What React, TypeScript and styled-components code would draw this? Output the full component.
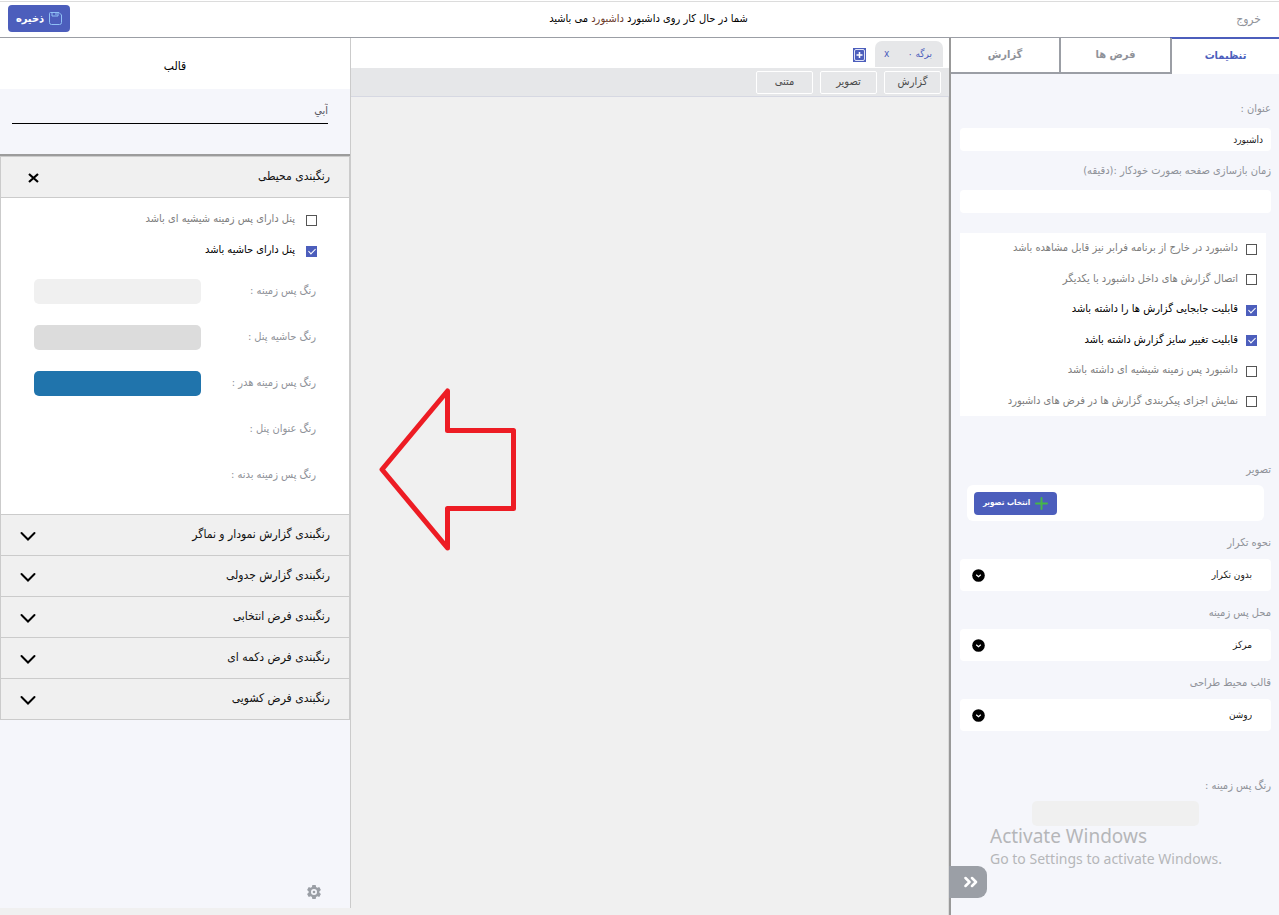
import React from 'react';
import styled, { createGlobalStyle, css } from 'styled-components';

const c = {
  primary: '#4c5ebc',
  panel: '#f5f6fb',
  canvas: '#f0f0f0',
  strip: '#e6e7e9',
  line: '#cbcbcb',
  frame: '#9b9ea5',
  muted: '#8f9299',
  text: '#1c1c1c',
};

const GlobalStyle = createGlobalStyle`
  *, *::before, *::after { box-sizing: border-box; }
  html, body { margin: 0; }
  body {
    background: ${c.canvas};
    color: ${c.text};
    font-family: 'DejaVu Sans Condensed', 'DejaVu Sans', sans-serif;
    font-size: 11px;
    line-height: 16px;
  }
  button, input, select { font: inherit; color: inherit; margin: 0; }
  button { border: 0; background: none; padding: 0; cursor: pointer; }
`;

const Page = styled.div`
  display: flex;
  flex-direction: column;
  min-height: 100vh;
`;

const TopBar = styled.header`
  display: grid;
  grid-template-columns: 1fr auto 1fr;
  align-items: center;
  height: 38px;
  padding: 0 18px 0 8px;
  background: #fff;
  border-bottom: 1px solid ${c.frame};
  box-shadow: inset 0 1px #fff, inset 0 2px #dcdcdc;
`;

const ExitLink = styled.a`
  justify-self: start;
  color: ${c.muted};
  font-size: 12px;
  text-decoration: none;
`;

const Status = styled.p`
  margin: 0;
  padding-left: 28px;
  color: #000;
`;

const Accent = styled.span`
  color: #6b3a2c;
`;

const PrimaryButton = styled.button<{ $small?: boolean }>`
  display: flex;
  align-items: center;
  justify-content: center;
  gap: 5px;
  width: ${(p) => (p.$small ? 83 : 62)}px;
  height: ${(p) => (p.$small ? 23 : 27)}px;
  border-radius: 4px;
  background: ${c.primary};
  color: #fff;
  font-size: ${(p) => (p.$small ? 8 : 11)}px;
  font-weight: bold;
  white-space: nowrap;
`;

const SaveButton = styled(PrimaryButton)`
  justify-self: end;
`;

const Workspace = styled.main`
  flex: 1;
  display: grid;
  grid-template-columns: 330px minmax(0, 1fr) 351px;
`;

const Settings = styled.aside`
  position: relative;
  display: flex;
  flex-direction: column;
  background: ${c.panel};
  border-left: 2px solid #999;
`;

const Tabs = styled.nav`
  display: grid;
  grid-template-columns: 109px 111px 1fr;
  height: 36px;
`;

const Tab = styled.button<{ $active?: boolean }>`
  background: #fff;
  color: ${c.muted};
  font-weight: bold;
  border-bottom: 2px solid ${c.frame};
  border-left: 2px solid ${c.frame};
  &:last-child { border-left: 0; }
  ${(p) =>
    p.$active &&
    css`
      color: ${c.primary};
      border-bottom: 0;
      box-shadow: 0 -1px ${c.primary}, inset 0 1px ${c.primary};
    `}
`;

const SettingsBody = styled.div`
  display: flex;
  flex-direction: column;
  padding: 27px 8px 0 9px;
`;

const Field = styled.div<{ $gap?: number }>`
  display: flex;
  flex-direction: column;
  gap: ${(p) => p.$gap ?? 8}px;
  margin-bottom: 14px;
`;

const TextField = styled(Field)`
  margin-bottom: 12px;
`;

const Caption = styled.label`
  color: ${c.muted};
`;

const TextBox = styled.input`
  width: 100%;
  height: 23px;
  padding: 0 8px;
  border: 0;
  border-radius: 4px;
  background: #fff;
  font-size: 10px;
`;

const CheckCard = styled.div`
  display: flex;
  flex-direction: column;
  justify-content: space-between;
  height: 183px;
  margin: 8px 5px 46px 0;
  padding: 7px 9px;
  background: #fff;
`;

const CheckLabel = styled.label<{ $gap: number }>`
  display: flex;
  align-items: center;
  gap: ${(p) => p.$gap}px;
  color: #7d7d7d;
  white-space: nowrap;
  &:has(input:checked) { color: #000; }
`;

const CheckBox = styled.input`
  appearance: none;
  flex: none;
  width: 11px;
  height: 11px;
  position: relative;
  top: 1px;
  border: 1px solid #555;
  background: #fff;
  &:checked {
    border-color: ${c.primary};
    background: ${c.primary};
  }
  &:checked::after {
    content: '';
    position: absolute;
    left: 3px;
    top: 0;
    width: 4px;
    height: 7px;
    border: solid #fff;
    border-width: 0 1px 1px 0;
    transform: rotate(45deg);
  }
`;

const PictureBox = styled.div`
  display: flex;
  align-items: center;
  justify-content: flex-end;
  height: 36px;
  margin: 0 7px;
  padding: 0 7px;
  border-radius: 6px;
  background: #fff;
`;

const SelectWrap = styled.div`
  display: flex;
  align-items: center;
  height: 32px;
  padding: 0 19px 0 12px;
  border-radius: 4px;
  background: #fff;
  font-size: 10px;
`;

const PlainSelect = styled.select`
  appearance: none;
  flex: 1;
  height: 100%;
  padding: 0;
  border: 0;
  background: transparent;
`;

const ColorField = styled(Field)`
  margin-top: 33px;
`;

const Swatch = styled.button<{ $color: string; $center?: boolean }>`
  width: 167px;
  height: 25px;
  border-radius: 5px;
  background: ${(p) => p.$color};
  ${(p) => p.$center && 'align-self: center;'}
`;

const CollapseButton = styled.button`
  position: absolute;
  left: -2px;
  bottom: 17px;
  display: flex;
  align-items: center;
  justify-content: center;
  width: 38px;
  height: 32px;
  padding-left: 6px;
  border-radius: 0 9px 9px 0;
  background: #9b9fa6;
  color: #fff;
`;

const Watermark = styled.div`
  direction: ltr;
  position: absolute;
  left: 39px;
  bottom: 46px;
  color: #b5b6b9;
  font: 14px/20px 'Noto Sans', sans-serif;
  white-space: nowrap;
  pointer-events: none;
`;

const WatermarkTitle = styled.div`
  font-size: 19px;
  line-height: 26px;
`;

const Center = styled.section`
  display: flex;
  flex-direction: column;
`;

const SheetBar = styled.div`
  display: flex;
  align-items: flex-end;
  gap: 9px;
  height: 30px;
  padding: 0 6px 1px 0;
  background: #fff;
`;

const Sheet = styled.div`
  display: flex;
  align-items: center;
  justify-content: space-between;
  width: 68px;
  height: 26px;
  padding: 0 11px 0 9px;
  border-radius: 7px 7px 0 0;
  background: ${c.strip};
  color: ${c.primary};
  font-size: 10px;
`;

const AddSheet = styled.button`
  display: flex;
  margin-bottom: 5px;
`;

const ToolBar = styled.div`
  display: flex;
  align-items: center;
  gap: 7px;
  height: 29px;
  padding: 0 8px 0 0;
  background: ${c.strip};
  border-bottom: 1px solid #d6d8e2;
`;

const Tool = styled.button`
  width: 57px;
  height: 23px;
  border: 1px solid #fff;
  border-radius: 2px;
  color: #4b4b4b;
`;

const Canvas = styled.div`
  position: relative;
  flex: 1;
  background: ${c.canvas};
  border-right: 1px solid #dcdcdc;
`;

const Arrow = styled.svg`
  position: absolute;
  left: 27px;
  top: 290px;
`;

const ThemePanel = styled.aside`
  display: flex;
  flex-direction: column;
  margin-bottom: 7px;
  background: ${c.panel};
  border-right: 1px solid ${c.line};
`;

const ThemeTitle = styled.h2`
  margin: 0;
  padding: 20px 0 15px;
  background: #fff;
  color: #000;
  font-size: 12px;
  font-weight: normal;
  line-height: 16px;
  text-align: center;
`;

const ThemeChooser = styled.div`
  display: flex;
  padding: 10px 22px 30px 12px;
  border-bottom: 2px solid #9c9c9c;
`;

const ThemeSelect = styled(PlainSelect)`
  height: 25px;
  border-bottom: 1px solid #000;
  color: #55555f;
`;

const Accordion = styled.div`
  border: 1px solid ${c.line};
`;

const AccordionHead = styled.button`
  display: flex;
  align-items: center;
  justify-content: space-between;
  width: 100%;
  height: 41px;
  padding: 0 19px 2px 18px;
  background: ${c.canvas};
  border-bottom: 1px solid ${c.line};
  color: #111;
  font-size: 12px;
  &:last-child { height: 40px; border-bottom: 0; }
`;

const AccordionBody = styled.div`
  padding: 13px 33px 16px;
  background: #fff;
  border-bottom: 1px solid ${c.line};
`;

const PanelChecks = styled.div`
  display: flex;
  flex-direction: column;
  gap: 15px;
  margin: 0 -1px 10px 0;
`;

const ColorRow = styled.div`
  display: flex;
  align-items: center;
  justify-content: space-between;
  height: 46px;
`;

const PanelFooter = styled.div`
  margin-top: auto;
  padding: 0 28px 8px;
`;

const IconButton = styled.button`
  display: flex;
`;

const SaveIcon = () => (
  <svg width="13" height="13" viewBox="0 0 13 13" fill="none" stroke="#8fc0f5">
    <path d="M.5 1.500v9a2 2 0 0 0 2 2h8a2 2 0 0 0 2-2V3L10 .5H1.500a1 1 0 0 0-1 1Z" />
    <path d="M3 .5v3.500h6V.5M7 1v2" />
  </svg>
);

const PlusIcon = () => (
  <svg width="13" height="13" viewBox="0 0 13 13" stroke="#45b649" strokeWidth="2" strokeLinecap="round">
    <path d="M6.500 1v11M1 6.500h11" />
  </svg>
);

const AddSheetIcon = () => (
  <svg width="13" height="14" viewBox="0 0 13 14" fill="none">
    <rect width="13" height="14" fill={c.primary} />
    <rect x="1.500" y="1.500" width="10" height="11" rx="1.500" stroke="#dfe3f6" />
    <path d="M6.500 4v6M3.500 7h6" stroke="#fff" strokeWidth="1.500" />
  </svg>
);

const RoundChevron = () => (
  <svg width="13" height="13" viewBox="0 0 13 13" fill="none">
    <circle cx="6.500" cy="6.500" r="6.300" fill="#000" />
    <path d="m4.200 5.800 2.300 1.900 2.300-1.900" stroke="#fff" strokeWidth="1.200" />
  </svg>
);

const ChevronDown = () => (
  <svg width="18" height="14" viewBox="0 0 18 14" fill="none" stroke="#000" strokeWidth="2" strokeLinecap="round">
    <path d="m2.500 6 6.500 6.500L15.500 6" />
  </svg>
);

const CloseIcon = () => (
  <svg width="20" height="16" viewBox="0 0 20 16" fill="none" stroke="#000" strokeWidth="2.200">
    <path d="m10 6 9 8M19 6l-9 8" />
  </svg>
);

const DoubleChevron = () => (
  <svg width="14" height="12" viewBox="0 0 14 12" fill="none" stroke="#fff" strokeWidth="2.500" strokeLinecap="round" strokeLinejoin="round">
    <path d="m1.500 2 4 4-4 4M8 2l4 4-4 4" />
  </svg>
);

const GearIcon = () => (
  <svg width="16" height="16" viewBox="0 0 24 24" fill="#9a9ea5">
    <path
      fillRule="evenodd"
      d="M9.500 1.500h5l.6 3 1.900 1.100 2.900-1 2.500 4.300-2.300 2v2.200l2.300 2-2.500 4.300-2.900-1-1.900 1.100-.6 3h-5l-.6-3L7 18.400l-2.900 1-2.500-4.300 2.300-2v-2.200l-2.300-2 2.500-4.300 2.900 1 1.900-1.100ZM12 7.500a4.500 4.500 0 1 0 0 9 4.500 4.500 0 0 0 0-9Zm0 2.500a2 2 0 1 1 0 4 2 2 0 0 1 0-4Z"
    />
  </svg>
);

const dashboardOptions = [
  { text: 'داشبورد در خارج از برنامه فرابر نیز قابل مشاهده باشد', on: false },
  { text: 'اتصال گزارش های داخل داشبورد با یکدیگر', on: false },
  { text: 'قابلیت جابجایی گزارش ها را داشته باشد', on: true },
  { text: 'قابلیت تغییر سایز گزارش داشته باشد', on: true },
  { text: 'داشبورد پس زمینه شیشیه ای داشته باشد', on: false },
  { text: 'نمایش اجزای پیکربندی گزارش ها در فرض های داشبورد', on: false },
];

const selects = [
  { id: 'repeat', label: 'نحوه تکرار', value: 'بدون تکرار' },
  { id: 'position', label: 'محل پس زمینه', value: 'مرکز' },
  { id: 'mode', label: 'قالب محیط طراحی', value: 'روشن' },
];

const panelColors = [
  { label: 'رنگ پس زمینه :', color: '#f0f0f0' },
  { label: 'رنگ حاشیه پنل :', color: '#dcdcdc' },
  { label: 'رنگ پس زمینه هدر :', color: '#2074ac' },
  { label: 'رنگ عنوان پنل :', color: '#ffffff' },
  { label: 'رنگ پس زمینه بدنه :', color: '#ffffff' },
];

const sections = [
  'رنگبندی گزارش نمودار و نماگر',
  'رنگبندی گزارش جدولی',
  'رنگبندی فرض انتخابی',
  'رنگبندی فرض دکمه ای',
  'رنگبندی فرض کشویی',
];

const Check = ({ text, on, gap }: { text: string; on: boolean; gap: number }) => (
  <CheckLabel $gap={gap}>
    <CheckBox type="checkbox" defaultChecked={on} />
    {text}
  </CheckLabel>
);

export default function App() {
  return (
    <Page dir="rtl" lang="fa">
      <GlobalStyle />
      <TopBar>
        <ExitLink href="#exit">خروج</ExitLink>
        <Status>
          شما در حال کار روی داشبورد <Accent>داشبورد</Accent> می باشید
        </Status>
        <SaveButton type="button">
          <SaveIcon />
          ذخیره
        </SaveButton>
      </TopBar>
      <Workspace>
        <Settings>
          <Tabs>
            <Tab type="button" $active>تنظیمات</Tab>
            <Tab type="button">فرض ها</Tab>
            <Tab type="button">گزارش</Tab>
          </Tabs>
          <SettingsBody>
            <TextField $gap={11}>
              <Caption htmlFor="title">عنوان :</Caption>
              <TextBox id="title" defaultValue="داشبورد" />
            </TextField>
            <TextField $gap={11}>
              <Caption htmlFor="refresh">زمان بازسازی صفحه بصورت خودکار :(دقیقه)</Caption>
              <TextBox id="refresh" />
            </TextField>
            <CheckCard>
              {dashboardOptions.map((o) => (
                <Check key={o.text} text={o.text} on={o.on} gap={8} />
              ))}
            </CheckCard>
            <Field $gap={7}>
              <Caption as="span">تصویر</Caption>
              <PictureBox>
                <PrimaryButton type="button" $small>
                  <PlusIcon />
                  انتخاب تصویر
                </PrimaryButton>
              </PictureBox>
            </Field>
            {selects.map((s) => (
              <Field key={s.id} $gap={8}>
                <Caption htmlFor={s.id}>{s.label}</Caption>
                <SelectWrap>
                  <PlainSelect id={s.id}>
                    <option>{s.value}</option>
                  </PlainSelect>
                  <RoundChevron />
                </SelectWrap>
              </Field>
            ))}
            <ColorField $gap={7}>
              <Caption as="span">رنگ پس زمینه :</Caption>
              <Swatch type="button" aria-label="رنگ پس زمینه" $color="#f0f0f0" $center />
            </ColorField>
          </SettingsBody>
          <Watermark>
            <WatermarkTitle>Activate Windows</WatermarkTitle>
            Go to Settings to activate Windows.
          </Watermark>
          <CollapseButton type="button" aria-label="بستن">
            <DoubleChevron />
          </CollapseButton>
        </Settings>

        <Center>
          <SheetBar>
            <Sheet>
              <span>برگه ۰</span>
              <button type="button">x</button>
            </Sheet>
            <AddSheet type="button" aria-label="برگه جدید">
              <AddSheetIcon />
            </AddSheet>
          </SheetBar>
          <ToolBar>
            <Tool type="button">گزارش</Tool>
            <Tool type="button">تصویر</Tool>
            <Tool type="button">متنی</Tool>
          </ToolBar>
          <Canvas>
            <Arrow
              width="142"
              height="166"
              viewBox="0 0 142 166"
              fill="none"
              stroke="#ed1c24"
              strokeWidth="5"
              strokeLinejoin="round"
            >
              <path d="M4 82.500 69.500 4v39.500h66v78h-66V161Z" />
            </Arrow>
          </Canvas>
        </Center>

        <ThemePanel>
          <ThemeTitle>قالب</ThemeTitle>
          <ThemeChooser>
            <ThemeSelect aria-label="قالب">
              <option>آبي</option>
            </ThemeSelect>
          </ThemeChooser>
          <Accordion>
            <AccordionHead type="button">
              رنگبندی محیطی
              <CloseIcon />
            </AccordionHead>
            <AccordionBody>
              <PanelChecks>
                <Check text="پنل دارای پس زمینه شیشیه ای باشد" on={false} gap={11} />
                <Check text="پنل دارای حاشیه باشد" on gap={11} />
              </PanelChecks>
              {panelColors.map((p) => (
                <ColorRow key={p.label}>
                  <Caption as="span">{p.label}</Caption>
                  <Swatch type="button" aria-label={p.label} $color={p.color} />
                </ColorRow>
              ))}
            </AccordionBody>
            {sections.map((s) => (
              <AccordionHead key={s} type="button">
                {s}
                <ChevronDown />
              </AccordionHead>
            ))}
          </Accordion>
          <PanelFooter>
            <IconButton type="button" aria-label="تنظیمات">
              <GearIcon />
            </IconButton>
          </PanelFooter>
        </ThemePanel>
      </Workspace>
    </Page>
  );
}
